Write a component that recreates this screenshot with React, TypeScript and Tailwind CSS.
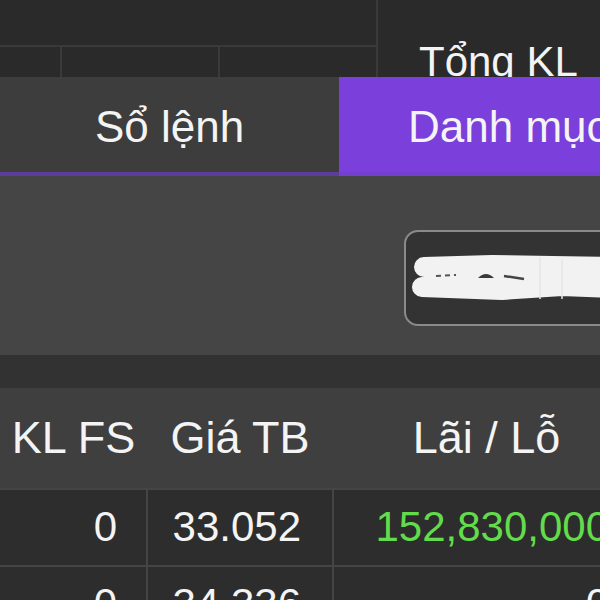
export default function App() {
  return (
    <div
      className="w-[600px] h-[600px] overflow-hidden bg-[#2a2a2a] text-[#f4f4f4]"
      style={{ fontFamily: '"Liberation Sans", Arial, sans-serif' }}
    >
      {/* Top table (partially hidden) */}
      <div className="h-[77px] flex overflow-hidden">
        <div className="w-[376px] flex flex-col">
          <div className="h-[47px] border-b-2 border-[#3a3a3a]" />
          <div className="flex-1 flex">
            <div className="w-[62px] border-r-2 border-[#3a3a3a]" />
            <div className="w-[158px] border-r-2 border-[#3a3a3a]" />
            <div className="flex-1" />
          </div>
        </div>
        <div className="w-[2px] bg-[#3a3a3a]" />
        <div className="flex-1 pl-[41px] pt-[41px]">
          <div className="text-[42px] leading-[42px] whitespace-nowrap">Tổng KL</div>
        </div>
      </div>

      {/* Tabs */}
      <div className="h-[95px] flex">
        <div className="w-[339px] bg-[#3d3d3d] flex justify-center pt-[28px]">
          <span className="text-[44px] leading-[44px] whitespace-nowrap">Sổ lệnh</span>
        </div>
        <div className="flex-1 bg-[#7b3fdb] pl-[69px] pt-[28px] overflow-hidden">
          <span className="text-[44px] leading-[44px] whitespace-nowrap">Danh mục</span>
        </div>
      </div>
      <div className="h-[4px] flex">
        <div className="w-[339px] bg-[#5c3c9c]" />
        <div className="flex-1 bg-[#7440d0]" />
      </div>

      {/* Filter panel */}
      <div className="h-[179px] bg-[#454545] pt-[54px] pl-[404px] overflow-hidden">
        <div className="w-[240px] h-[96px] rounded-[14px] border-2 border-[#8a8a8a] bg-[#333333] flex items-center pl-[6px]">
          <svg width="200" height="46" viewBox="0 0 200 46">
            <g stroke="#f2f2f2" strokeLinecap="round" strokeLinejoin="round" fill="none">
              <path d="M12 12 L80 10 L140 11 L200 12" strokeWidth="20" />
              <path d="M10 32 L90 35 L150 31 L200 33" strokeWidth="20" />
              <path d="M20 22 L196 22" strokeWidth="16" />
            </g>
            <path d="M24 21 L44 20" stroke="#555" strokeWidth="2" strokeDasharray="5 4" />
            <path d="M66 23 Q74 15 82 23 Z" fill="#3a3a3a" />
            <path d="M92 21 L112 24" stroke="#444" strokeWidth="2.5" />
            <path d="M128 2 L128 44 M150 4 L150 44" stroke="#e6e6e6" strokeWidth="1.5" />
          </svg>
        </div>
      </div>

      <div className="h-[33px] bg-[#323232]" />

      {/* Portfolio table */}
      <div className="w-[640px]">
        <div className="h-[100px] bg-[#3f3f3f] flex text-[45px] leading-[45px] pt-[27px] whitespace-nowrap">
          <div className="w-[147px] text-center">KL FS</div>
          <div className="w-[186px] text-center">Giá TB</div>
          <div className="w-[307px] text-center">Lãi / Lỗ</div>
        </div>
        <div className="bg-[#454545] flex flex-col gap-[2px] pt-[2px]">
          <Row kl="0" price="33.052" pnl="152,830,000" green />
          <Row kl="0" price="34.336" pnl="0" />
        </div>
      </div>
    </div>
  )
}

function Row({ kl, price, pnl, green }: { kl: string; price: string; pnl: string; green?: boolean }) {
  return (
    <div className="h-[75px] flex gap-[2px] text-[42px] leading-[42px] whitespace-nowrap">
      <div className="w-[146px] bg-[#2d2d2d] text-right pr-[29px] pt-[16px]">{kl}</div>
      <div className="w-[184px] bg-[#2d2d2d] text-right pr-[31px] pt-[16px]">{price}</div>
      <div
        className={`w-[306px] bg-[#2d2d2d] text-right pr-[31px] pt-[16px] ${green ? 'text-[#63dc4c]' : ''}`}
      >
        {pnl}
      </div>
    </div>
  )
}
